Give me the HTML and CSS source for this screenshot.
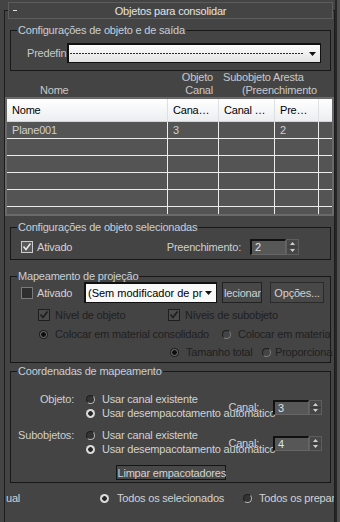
FILE: index.html
```html
<!DOCTYPE html>
<html lang="pt">
<head>
    <meta charset="UTF-8">
    <meta name="viewport" content="width=device-width, initial-scale=1.0">
    <title>Objetos para consolidar</title>
    <link rel="stylesheet" href="styles.css">
</head>
<body>
<div class="window">
    <div class="rollout">
        <!--rollout title bar-->
        <div class="rollout-title">
            <span class="toggle"></span>
            <span class="title-text">Objetos para consolidar</span>
            <span class="toggle-space"></span>
        </div>

        <div class="rollout-body">
            <!--object and output settings-->
            <fieldset class="group g-output">
                <legend>Configurações de objeto e de saída</legend>
                <div class="preset-row">
                    <span class="preset-label">Predefin</span>
                    <div class="combo preset-combo">
                        <span class="dash-line"></span>
                        <svg class="combo-arrow" width="7" height="4" viewBox="0 0 7 4"><path d="M0 0H7L3.5 4Z" fill="#111"/></svg>
                    </div>
                </div>
            </fieldset>

            <!--column captions above the list-->
            <div class="col-captions">
                <div class="cap-name">Nome</div>
                <div class="cap-obj">Objeto<br>Canal</div>
                <div class="cap-sub">Subobjeto Aresta<span class="cap-fill">(Preenchimento</span></div>
            </div>

            <!--list of objects-->
            <div class="listview">
                <div class="lv-row lv-head">
                    <div class="cell">Nome</div>
                    <div class="cell">Cana…</div>
                    <div class="cell">Canal …</div>
                    <div class="cell">Pre…</div>
                    <div class="cell"></div>
                </div>
                <div class="lv-body">
                    <div class="lv-row">
                        <div class="cell">Plane001</div>
                        <div class="cell">3</div>
                        <div class="cell"></div>
                        <div class="cell">2</div>
                        <div class="cell"></div>
                    </div>
                    <div class="lv-row"><div class="cell"></div><div class="cell"></div><div class="cell"></div><div class="cell"></div><div class="cell"></div></div>
                    <div class="lv-row"><div class="cell"></div><div class="cell"></div><div class="cell"></div><div class="cell"></div><div class="cell"></div></div>
                    <div class="lv-row"><div class="cell"></div><div class="cell"></div><div class="cell"></div><div class="cell"></div><div class="cell"></div></div>
                    <div class="lv-row"><div class="cell"></div><div class="cell"></div><div class="cell"></div><div class="cell"></div><div class="cell"></div></div>
                    <div class="lv-row"><div class="cell"></div><div class="cell"></div><div class="cell"></div><div class="cell"></div><div class="cell"></div></div>
                </div>
            </div>

            <!--selected object settings-->
            <fieldset class="group g-selected">
                <legend>Configurações de objeto selecionadas</legend>
                <div class="sel-row">
                    <span class="check-item">
                        <span class="check">
                            <svg width="10" height="10" viewBox="0 0 10 10"><path d="M1.5 4.5L4 7.5L8.5 1.5" fill="none" stroke="#e8e8e8" stroke-width="1.6"/></svg>
                        </span>
                        Ativado
                    </span>
                    <span class="fill-label">Preenchimento:</span>
                    <div class="spinner">
                        <span class="spin-field">2</span>
                        <span class="spin-arrows">
                            <svg width="11" height="14" viewBox="0 0 11 14"><path d="M3 5H8L5.5 2Z M3 9H8L5.5 12Z" fill="#cfcfcf"/><path d="M0 7H11" stroke="#3a3a3a"/></svg>
                        </span>
                    </div>
                </div>
            </fieldset>

            <!--projection mapping-->
            <fieldset class="group g-projection">
                <legend>Mapeamento de projeção</legend>
                <div class="proj-row">
                    <span class="check-item proj-enable">
                        <span class="check off"></span>
                        Ativado
                    </span>
                    <div class="combo proj-combo">
                        <span class="combo-text">(Sem modificador de pr</span>
                        <svg class="combo-arrow" width="7" height="4" viewBox="0 0 7 4"><path d="M0 0H7L3.5 4Z" fill="#111"/></svg>
                    </div>
                    <button class="btn btn-select">lecionar</button>
                    <button class="btn btn-options">Opções...</button>
                </div>
                <div class="opt-row dim row-levels">
                    <span class="check-item lvl-object">
                        <span class="check dis">
                            <svg width="10" height="10" viewBox="0 0 10 10"><path d="M1.5 4.5L4 7.5L8.5 1.5" fill="none" stroke="#1e1e1e" stroke-width="1.6"/></svg>
                        </span>
                        Nível de objeto
                    </span>
                    <span class="check-item">
                        <span class="check dis">
                            <svg width="10" height="10" viewBox="0 0 10 10"><path d="M1.5 4.5L4 7.5L8.5 1.5" fill="none" stroke="#1e1e1e" stroke-width="1.6"/></svg>
                        </span>
                        Níveis de subobjeto
                    </span>
                </div>
                <div class="opt-row dim row-material">
                    <span class="radio-item mat-consolidated"><span class="radio dis on"></span>Colocar em material consolidado</span>
                    <span class="radio-item"><span class="radio dis"></span>Colocar em materia</span>
                </div>
                <div class="opt-row dim row-size">
                    <span class="radio-item size-total"><span class="radio dis on"></span>Tamanho total</span>
                    <span class="radio-item tight"><span class="radio dis"></span>Proporciona</span>
                </div>
            </fieldset>

            <!--mapping coordinates-->
            <fieldset class="group g-coords">
                <legend>Coordenadas de mapeamento</legend>
                <div class="coord-block first">
                    <span class="coord-label">Objeto:</span>
                    <div class="coord-radios">
                        <span class="radio-item"><span class="radio"></span>Usar canal existente</span>
                        <span class="radio-item"><span class="radio on"></span>Usar desempacotamento automático</span>
                    </div>
                    <div class="canal">
                        <span class="canal-label">Canal:</span>
                        <div class="spinner small">
                            <span class="spin-field">3</span>
                            <span class="spin-arrows">
                                <svg width="11" height="13" viewBox="0 0 11 13"><path d="M3 5H8L5.5 2Z M3 8H8L5.5 11Z" fill="#cfcfcf"/><path d="M0 6.5H11" stroke="#3a3a3a"/></svg>
                            </span>
                        </div>
                    </div>
                </div>
                <div class="coord-block">
                    <span class="coord-label">Subobjetos:</span>
                    <div class="coord-radios">
                        <span class="radio-item"><span class="radio"></span>Usar canal existente</span>
                        <span class="radio-item"><span class="radio on"></span>Usar desempacotamento automático</span>
                    </div>
                    <div class="canal">
                        <span class="canal-label">Canal:</span>
                        <div class="spinner small">
                            <span class="spin-field">4</span>
                            <span class="spin-arrows">
                                <svg width="11" height="13" viewBox="0 0 11 13"><path d="M3 5H8L5.5 2Z M3 8H8L5.5 11Z" fill="#cfcfcf"/><path d="M0 6.5H11" stroke="#3a3a3a"/></svg>
                            </span>
                        </div>
                    </div>
                </div>
                <button class="btn btn-clear">Limpar empacotadores</button>
            </fieldset>

            <!--which objects to process-->
            <div class="scope-row">
                <span class="scope-first">ual</span>
                <span class="radio-item scope-sel"><span class="radio on"></span>Todos os selecionados</span>
                <span class="radio-item scope-prep"><span class="radio"></span>Todos os prepar</span>
            </div>
        </div>
    </div>
    <div class="scrollbar"></div>
</div>
</body>
</html>
```

FILE: styles.css
```css
/*base layout*/
* {
    box-sizing: border-box;
}

body {
    margin: 0;
    width: 340px;
    height: 522px;
    overflow: hidden;
    background-color: #444444;
    font-family: "Liberation Sans", Arial, sans-serif;
    font-size: 11px;
    letter-spacing: -0.2px;
    color: #d2d2d2;
}

.window {
    display: flex;
    height: 522px;
}

.rollout {
    flex: 1;
    min-width: 0;
    display: flex;
    flex-direction: column;
    margin: 10px 0 0 4px;
    border: 1px solid #1c1c1c;
    border-bottom: none;
}

.scrollbar {
    flex: none;
    width: 5px;
    border-left: 2px solid #262626;
    background-color: #4f4f4f;
}

/*rollout title*/
.rollout-title {
    display: flex;
    align-items: center;
    height: 17px;
    margin: -9px 1px 0 3px;
    border: 1px solid #5c5c5c;
    background-color: #444444;
    color: #e4e4e4;
}

.toggle {
    width: 4px;
    height: 1px;
    margin: 0 8px 0 4px;
    background-color: #e0e0e0;
}

.toggle-space {
    width: 16px;
}

.title-text {
    flex: 1;
    text-align: center;
}

.rollout-body {
    flex: 1;
    min-width: 0;
    overflow: hidden;
}

/*group boxes*/
.group {
    min-width: 0;
    margin: 5px 3px 0 5px;
    padding: 0 6px;
    border: 1px solid #181818;
}

.group legend {
    padding: 0 1px;
    line-height: 12px;
    color: #c7cfd8;
}

.g-selected {
    padding-bottom: 4px;
}

.g-projection {
    margin-top: 10px;
    padding-bottom: 3px;
}

.g-coords {
    margin-top: 2px;
    padding-bottom: 2px;
}

/*combo boxes*/
.combo {
    display: flex;
    align-items: center;
    border: 1px solid #111111;
    border-top-width: 2px;
    border-left-width: 2px;
    background: linear-gradient(#fdfdfd, #e3e3e3);
    color: #000;
}

.preset-row {
    display: flex;
    align-items: center;
    height: 20px;
    margin: 7px 3px 7px 10px;
}

.preset-label {
    width: 40px;
    overflow: hidden;
    white-space: nowrap;
    color: #c9c9c9;
}

.preset-combo {
    flex: 1;
    height: 20px;
    padding: 0 4px 0 1px;
}

.dash-line {
    flex: 1;
    height: 1px;
    margin-right: 6px;
    background: repeating-linear-gradient(90deg, #2a2a2a 0 2px, transparent 2px 3px);
}

/*captions over list*/
.col-captions {
    display: flex;
    height: 26px;
    line-height: 13px;
    color: #c9c9c9;
    white-space: nowrap;
}

.cap-name {
    width: 160px;
    padding: 13px 0 0 35px;
}

.cap-obj {
    width: 49px;
    padding-right: 1px;
    text-align: right;
}

.cap-sub {
    flex: 1;
    padding-left: 9px;
}

.cap-fill {
    display: block;
    padding-left: 19px;
}

/*list view*/
.listview {
    height: 119px;
    border: 2px solid #6a6a6a;
}

.lv-row {
    display: grid;
    grid-template-columns: 161px 51px 56px 44px 1fr;
    height: 17px;
    border-bottom: 1px solid #ececec;
}

.lv-row .cell {
    padding-left: 5px;
    line-height: 16px;
    border-right: 1px solid #ececec;
    white-space: nowrap;
    overflow: hidden;
}

.lv-row .cell:last-child {
    border-right: none;
}

.lv-head {
    height: 23px;
    background: linear-gradient(#ffffff, #eceef1);
    border-bottom: 1px solid #d2d4d8;
    color: #000;
}

.lv-head .cell {
    line-height: 22px;
    border-right-color: #dedfe2;
}

.lv-body {
    height: 92px;
    overflow: hidden;
    background-color: #545454;
    color: #cfcfcf;
}

/*checks and radios*/
.check-item,
.radio-item {
    display: flex;
    align-items: center;
    white-space: nowrap;
}

.check {
    display: flex;
    align-items: center;
    justify-content: center;
    width: 12px;
    height: 12px;
    margin-right: 4px;
    border: 1px solid #cdcdcd;
    background-color: #5a5a5a;
}

.check.off {
    border-color: #7a7a7a;
    background-color: #2f2f2f;
}

.check.dis {
    border-color: #1e1e1e;
    background-color: #4b4b4b;
}

.radio {
    flex: none;
    width: 9px;
    height: 9px;
    margin-right: 7px;
    border-radius: 50%;
    border: 1px solid;
    border-color: #1e1e1e #b8b8b8 #b8b8b8 #1e1e1e;
    background-color: #333333;
}

.radio.on {
    border: none;
    background: radial-gradient(circle, #262626 0 2px, #d9d9d9 2.6px);
}

.radio.dis {
    border-color: #1c1c1c #7c7c7c #7c7c7c #1c1c1c;
    background-color: #444444;
}

.radio.dis.on {
    border: none;
    background: radial-gradient(circle, #0e0e0e 0 2px, #5e5e5e 2.6px 3.3px, #1e1e1e 3.8px);
}

/*selected objects group*/
.sel-row {
    display: flex;
    align-items: center;
    height: 16px;
    margin: 6px 25px 0 4px;
}

.fill-label {
    margin: 0 9px 0 auto;
    color: #cfcfcf;
}

/*spinners*/
.spinner {
    display: flex;
    flex: none;
    height: 16px;
}

.spinner.small {
    height: 15px;
}

.spin-field {
    width: 36px;
    padding-left: 3px;
    line-height: 13px;
    border-top: 2px solid #111111;
    border-left: 2px solid #111111;
    border-right: 1px solid #666666;
    border-bottom: 1px solid #666666;
    background-color: #575757;
    color: #d8e4f0;
}

.spin-arrows {
    display: flex;
    align-items: center;
    width: 13px;
    border: 1px solid #5e5e5e;
    background-color: #474747;
}

/*projection group*/
.proj-row {
    display: flex;
    align-items: center;
    height: 21px;
    margin-left: 4px;
}

.proj-enable {
    flex: none;
    width: 63px;
}

.proj-combo {
    flex: none;
    width: 133px;
    height: 21px;
    padding: 0 4px 0 2px;
    background: #f9f9f9;
}

.combo-text {
    flex: 1;
    overflow: hidden;
    white-space: nowrap;
    letter-spacing: 0;
}

.btn {
    flex: none;
    height: 21px;
    padding: 0 1px;
    border: 1px solid #222222;
    background-color: #484848;
    color: #d2d2d2;
    font-family: inherit;
    font-size: 11px;
    letter-spacing: -0.2px;
    white-space: nowrap;
}

.btn-select {
    width: 40px;
    margin-left: 5px;
    overflow: hidden;
}

.btn-options {
    width: 54px;
    margin-left: 8px;
    border-color: #2a2a2a;
}

.opt-row {
    display: flex;
    align-items: center;
    height: 14px;
    margin-top: 5px;
}

.opt-row > span {
    flex: none;
}

.dim {
    color: #1f1f1f;
}

.row-levels .check {
    margin-right: 5px;
}

.lvl-object {
    width: 130px;
    margin-left: 21px;
}

.row-material {
    margin-top: 5px;
}

.mat-consolidated {
    width: 183px;
    margin-left: 22px;
}

.row-size {
    margin-top: 4px;
}

.size-total {
    width: 92px;
    margin-left: 153px;
}

.tight .radio {
    margin-right: 4px;
}

/*mapping coordinates group*/
.coord-block {
    display: grid;
    grid-template-columns: 57px 1fr;
    grid-template-rows: 14px 14px;
    margin-top: 8px;
}

.coord-block.first {
    margin-top: 15px;
}

.coord-label {
    grid-column: 1;
    grid-row: 1;
    line-height: 14px;
    text-align: right;
    color: #cfcfcf;
}

.coord-radios {
    grid-column: 2;
    grid-row: 1 / 3;
    padding-left: 12px;
    line-height: 14px;
}

.coord-radios .radio-item {
    height: 14px;
}

.canal {
    grid-column: 2;
    grid-row: 1 / 3;
    justify-self: end;
    align-self: center;
    display: flex;
    align-items: center;
    margin: 2px 2px 0 0;
}

.canal-label {
    margin-right: 14px;
}

.btn-clear {
    display: block;
    width: 110px;
    height: 15px;
    margin: 9px auto 0;
    line-height: 12px;
    border-color: #151515;
}

/*bottom scope row*/
.scope-row {
    display: flex;
    align-items: center;
    height: 14px;
    margin-top: 8px;
    padding-left: 1px;
    white-space: nowrap;
}

.scope-row > span {
    flex: none;
}

.scope-first {
    width: 94px;
}

.scope-sel {
    width: 143px;
}

.scope-sel .radio {
    margin-right: 8px;
}
```
